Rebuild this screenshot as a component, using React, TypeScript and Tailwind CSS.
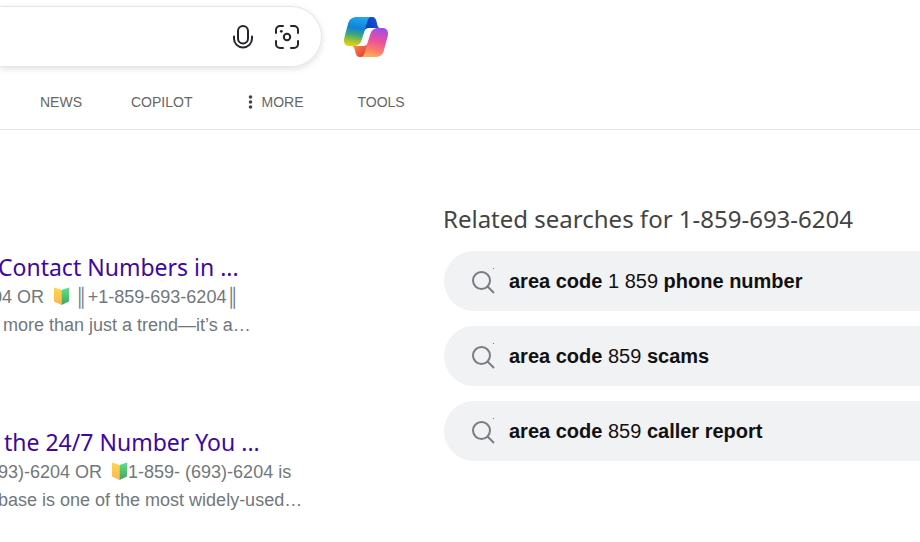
const results = [
  {
    id: 'contact-numbers',
    title: 'Contact Numbers in ...',
    before: '04 OR  ',
    after: ' ║+1-859-693-6204║',
    rest: ' more than just a trend—it’s a…',
    indent: '-indent-1.5',
  },
  {
    id: 'number-you',
    title: ' the 24/7 Number You ...',
    before: '93)-6204 OR  ',
    after: '1-859- (693)-6204 is',
    rest: 'base is one of the most widely-used…',
    indent: 'indent-0',
  },
];

const related = [
  { code: '1 859', tail: 'phone number' },
  { code: '859', tail: 'scams' },
  { code: '859', tail: 'caller report' },
];

function MicIcon() {
  return (
    <svg width="20" height="24" viewBox="0 0 20 24" fill="none" stroke="#24252b" strokeWidth="2" strokeLinecap="round">
      <rect x="5" y="1" width="10" height="17.500" rx="5" />
      <path d="M1 11.500v2a9 9 0 0 0 18 0v-2" />
    </svg>
  );
}

function LensIcon() {
  return (
    <svg width="24" height="24" viewBox="0 0 24 24" fill="none" stroke="#24252b" strokeWidth="2" strokeLinecap="round">
      <path d="M1 8V5a4 4 0 0 1 4-4h3M16 1h3a4 4 0 0 1 4 4v3M23 16v3a4 4 0 0 1-4 4h-3M8 23H5a4 4 0 0 1-4-4v-3" />
      <circle cx="12" cy="12" r="3.200" />
      <circle cx="6.300" cy="6.300" r="1.400" fill="#24252b" stroke="none" />
    </svg>
  );
}

function CopilotLogo() {
  return (
    <svg width="44" height="40" viewBox="0 0 44 40">
      <defs>
        <linearGradient id="cool" x1="14" y1="0" x2="9" y2="29" gradientUnits="userSpaceOnUse">
          <stop offset="0" stopColor="#22a5ee" />
          <stop offset=".38" stopColor="#0f83d8" />
          <stop offset=".62" stopColor="#40a878" />
          <stop offset=".84" stopColor="#a9c52c" />
          <stop offset="1" stopColor="#f2cb10" />
        </linearGradient>
        <linearGradient id="fold" x1="22" y1="10" x2="34" y2="4" gradientUnits="userSpaceOnUse">
          <stop offset="0" stopColor="#0b3fae" />
          <stop offset="1" stopColor="#1a50e0" />
        </linearGradient>
        <linearGradient id="warm" x1="36" y1="11" x2="28" y2="40" gradientUnits="userSpaceOnUse">
          <stop offset="0" stopColor="#a24bea" />
          <stop offset=".45" stopColor="#ec5299" />
          <stop offset=".75" stopColor="#fb7a6c" />
          <stop offset="1" stopColor="#ffae56" />
        </linearGradient>
        <linearGradient id="ember" x1="10" y1="30" x2="19" y2="40" gradientUnits="userSpaceOnUse">
          <stop offset="0" stopColor="#fa8051" />
          <stop offset="1" stopColor="#e2422e" />
        </linearGradient>
      </defs>
      <path fill="url(#fold)" d="M22 0h6c3 0 4 2 4.700 5 .8 4 1.300 6 3.300 6H25c-3 0-4.500 1.500-5.300 4.500L18.500 19z" />
      <path fill="url(#ember)" d="M22 40h-6c-3 0-4-2-4.700-5-.8-4-1.300-6-3.300-6h11c3 0 4.500-1.500 5.300-4.500L25.500 21z" />
      <path fill="url(#cool)" d="M13 0h15c-3 0-4 2-5 5.500L18 22C16.500 27 14 29 10 29H6c-5 0-7-3-5.500-9L4 7C5.300 2 8 0 13 0z" />
      <path fill="url(#warm)" d="M31 40H16c3 0 4-2 5-5.500L26 18C27.500 13 30 11 34 11h4c5 0 7 3 5.500 9L40 33C38.700 38 36 40 31 40z" />
    </svg>
  );
}

function Leaf() {
  return (
    <svg className="inline-block align-[-2px]" width="16" height="18" viewBox="0 0 16 18">
      <defs>
        <linearGradient id="leaf-left" x1="0" y1="0" x2="0" y2="1">
          <stop offset="0" stopColor="#ffd64f" />
          <stop offset="1" stopColor="#fbb552" />
        </linearGradient>
        <linearGradient id="leaf-right" x1="0" y1="0" x2="0" y2="1">
          <stop offset="0" stopColor="#5be386" />
          <stop offset="1" stopColor="#46a45e" />
        </linearGradient>
      </defs>
      <path fill="url(#leaf-left)" d="M0 .5 7.500 3v15L0 14.500z" />
      <path fill="url(#leaf-right)" d="M15 .5 7.500 3v15l7.500-3.500z" />
    </svg>
  );
}

function SearchIcon() {
  return (
    <svg width="24" height="28" viewBox="0 0 24 28" fill="none" stroke="#7a7c84" strokeWidth="2">
      <circle cx="9.500" cy="13.500" r="8.500" />
      <path d="m15.500 19.500 6.500 6.500" />
      <path d="M21 1.500h1" strokeWidth="1" />
    </svg>
  );
}

export default function App() {
  return (
    <div className="min-h-screen overflow-hidden bg-white pb-6 font-['Liberation_Sans',Arial,sans-serif]">
      <header className="border-b border-[#e8e8e8]">
        <div className="flex items-center gap-[22px] pt-1.5">
          <form className="flex h-[61px] w-[322px] items-center gap-[22px] rounded-r-full border border-l-0 border-[#e6e6e6] pr-[22px] shadow-[0_2px_6px_rgba(0,0,0,0.12)]">
            <input type="search" aria-label="Search" className="min-w-0 flex-1 px-4 text-lg outline-none" />
            <button type="button" aria-label="Search using voice"><MicIcon /></button>
            <button type="button" aria-label="Search using an image"><LensIcon /></button>
          </form>
          <a href="#copilot" aria-label="Copilot"><CopilotLogo /></a>
        </div>
        <nav className="flex h-[62px] items-center pt-2 pl-10 text-sm text-[#666]">
          <a href="#news" className="mr-[49px]">NEWS</a>
          <a href="#copilot-search" className="mr-14">COPILOT</a>
          <button type="button" className="mr-[54px] flex items-center gap-2">
            <svg width="5" height="14" viewBox="0 0 5 14" fill="#444">
              <circle cx="2.500" cy="2" r="1.800" />
              <circle cx="2.500" cy="7" r="1.800" />
              <circle cx="2.500" cy="12" r="1.800" />
            </svg>
            MORE
          </button>
          <button type="button">TOOLS</button>
        </nav>
      </header>

      <div className="flex">
        <main className="flex w-[443px] shrink-0 flex-col gap-[87px] pt-[121px]">
          {results.map((item) => (
            <article key={item.id} className="-ml-0.5 text-lg leading-7 whitespace-pre text-[#71777d]">
              <h2 className="font-['Noto_Sans',sans-serif] text-[23px] leading-8 text-[#4007a2]">
                <a href={`#${item.id}`}>{item.title}</a>
              </h2>
              <p className={item.indent}>{item.before}<Leaf />{item.after}</p>
              <p>{item.rest}</p>
            </article>
          ))}
        </main>

        <aside className="min-w-0 flex-1 pt-[73px]">
          <h2 className="mb-4 font-['Noto_Sans',sans-serif] text-2xl leading-8 whitespace-nowrap text-[#444]">
            Related searches for 1-859-693-6204
          </h2>
          <ul className="flex flex-col gap-[15px]">
            {related.map((item) => (
              <li key={item.tail} className="pl-px">
                <a href="#related" className="flex h-[60px] items-center gap-[13px] rounded-l-full bg-[#f1f2f4] pl-7 text-xl text-[#111]">
                  <SearchIcon />
                  <span><b>area code</b> {item.code} <b>{item.tail}</b></span>
                </a>
              </li>
            ))}
          </ul>
        </aside>
      </div>
    </div>
  );
}
